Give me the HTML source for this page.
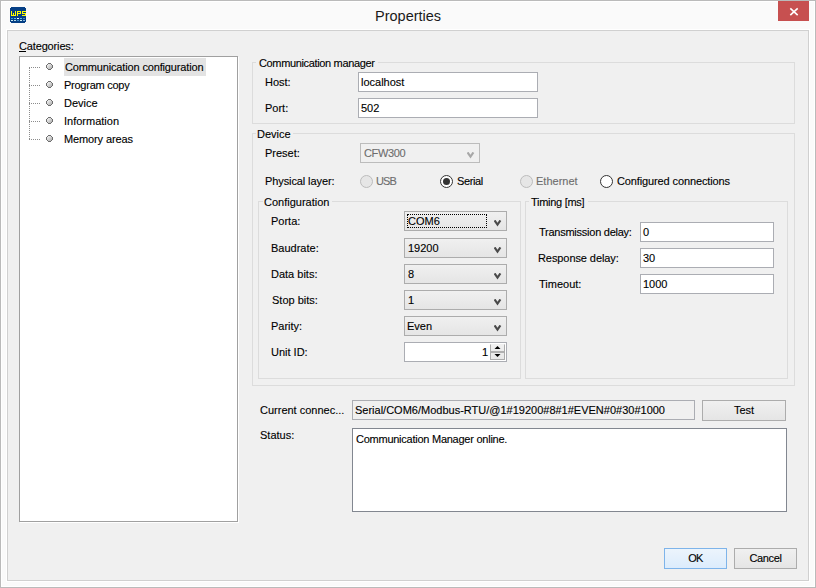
<!DOCTYPE html>
<html><head><meta charset="utf-8">
<style>
html,body{margin:0;padding:0;}
body{width:816px;height:588px;position:relative;overflow:hidden;background:#fafafa;font-family:"Liberation Sans",sans-serif;}
.a{position:absolute;box-sizing:border-box;}
.t{position:absolute;font-size:11px;line-height:13px;white-space:nowrap;color:#000;-webkit-text-stroke:0.12px #000;}
.gb{position:absolute;box-sizing:border-box;border:1px solid #dcdcdc;}
.lg{position:absolute;height:3px;background:#f0f0f0;}
.tb{position:absolute;box-sizing:border-box;border:1px solid #abadb3;background:#fff;}
.cb{position:absolute;box-sizing:border-box;border:1px solid #acacac;background:linear-gradient(#f0f0f0,#e5e5e5);}
.chev{position:absolute;width:8px;height:7px;}
.btn{position:absolute;box-sizing:border-box;border:1px solid #acacac;background:linear-gradient(#f0f0f0,#e5e5e5);}
.rd{position:absolute;box-sizing:border-box;width:13px;height:13px;border-radius:50%;border:1px solid #333;background:#fff;}
.rdd{border-color:#bcbcbc;background:#e6e6e6;}
.dis{color:#6d6d6d;-webkit-text-stroke-color:#6d6d6d;}
</style></head><body>
<!-- window frame -->
<div class="a" style="left:0;top:0;width:816px;height:588px;border:1px solid #bababa;"></div>
<div class="a" style="left:1px;top:1px;width:814px;height:586px;border:1px solid #ffffff;"></div>
<!-- icon -->
<svg class="a" style="left:10px;top:7px" width="16" height="16" viewBox="0 0 16 16" shape-rendering="crispEdges">
<rect x="0" y="1" width="16" height="14" fill="#053f85"/><rect x="1" y="0" width="14" height="16" fill="#053f85"/>
<g fill="#ffff00">
<rect x="1" y="4" width="1" height="5"/><rect x="3" y="6" width="1" height="3"/><rect x="5" y="4" width="1" height="5"/><rect x="1" y="8" width="5" height="1"/>
<rect x="7" y="4" width="1" height="5"/><rect x="7" y="4" width="4" height="1"/><rect x="10" y="4" width="1" height="3"/><rect x="7" y="6" width="4" height="1"/>
<rect x="12" y="4" width="4" height="1"/><rect x="12" y="4" width="1" height="3"/><rect x="12" y="6" width="4" height="1"/><rect x="15" y="6" width="1" height="3"/><rect x="12" y="8" width="4" height="1"/>
</g>
<rect x="1" y="11" width="2" height="1" fill="#2aa3d6"/><rect x="4" y="11" width="2" height="1" fill="#5cc0e6"/><rect x="7" y="11" width="2" height="1" fill="#ffffff"/><rect x="10" y="11" width="2" height="1" fill="#5cc0e6"/><rect x="13" y="11" width="2" height="1" fill="#4a86b8"/>
<rect x="1" y="13" width="2" height="1" fill="#c8e8f0"/><rect x="4" y="13" width="2" height="1" fill="#b8dcea"/><rect x="7" y="13" width="2" height="1" fill="#3f8fc8"/><rect x="10" y="13" width="2" height="1" fill="#d0ecf0"/><rect x="13" y="13" width="2" height="1" fill="#7fb4e0"/>
</svg>
<div class="t" style="left:375px;top:7px;font-size:14.5px;line-height:18px;-webkit-text-stroke:0;color:#1a1a1a;">Properties</div>
<!-- close -->
<div class="a" style="left:778px;top:1px;width:31px;height:20px;background:#c75050;"></div>
<svg class="a" style="left:789px;top:7px" width="10" height="10" viewBox="0 0 10 10"><path d="M1.3 1.3L8.7 8.2M8.7 1.3L1.3 8.2" stroke="#fff" stroke-width="1.6"/></svg>
<!-- client -->
<div class="a" style="left:7px;top:30px;width:802px;height:551px;border:1px solid #d0d0d0;background:#f0f0f0;box-shadow:0 0 0 1px #fff;"></div>

<div class="t" style="letter-spacing:-0.15px;left:19px;top:40px;">Categories:</div>
<div class="a" style="left:19px;top:51px;width:7px;height:1px;background:#000;"></div>
<!-- tree -->
<div class="a" style="left:19px;top:56px;width:219px;height:466px;border:1px solid #a0a0a0;background:#fff;box-shadow:1px 1px 0 #fff;"></div>
<div class="a" style="left:64px;top:58px;width:142px;height:18px;background:#e3e3e3;"></div>
<svg class="a" style="left:20px;top:57px" width="60" height="100">
<g fill="#8c8c8c" shape-rendering="crispEdges"><path d="M9 11h1v1h-1zM9 13h1v1h-1zM9 15h1v1h-1zM9 17h1v1h-1zM9 19h1v1h-1zM9 21h1v1h-1zM9 23h1v1h-1zM9 25h1v1h-1zM9 27h1v1h-1zM9 29h1v1h-1zM9 31h1v1h-1zM9 33h1v1h-1zM9 35h1v1h-1zM9 37h1v1h-1zM9 39h1v1h-1zM9 41h1v1h-1zM9 43h1v1h-1zM9 45h1v1h-1zM9 47h1v1h-1zM9 49h1v1h-1zM9 51h1v1h-1zM9 53h1v1h-1zM9 55h1v1h-1zM9 57h1v1h-1zM9 59h1v1h-1zM9 61h1v1h-1zM9 63h1v1h-1zM9 65h1v1h-1zM9 67h1v1h-1zM9 69h1v1h-1zM9 71h1v1h-1zM9 73h1v1h-1zM9 75h1v1h-1zM9 77h1v1h-1zM9 79h1v1h-1zM9 81h1v1h-1zM9 10h1v1h-1zM9 28h1v1h-1zM9 46h1v1h-1zM9 64h1v1h-1zM9 82h1v1h-1zM11 10h1v1h-1zM13 10h1v1h-1zM15 10h1v1h-1zM17 10h1v1h-1zM19 10h1v1h-1zM11 28h1v1h-1zM13 28h1v1h-1zM15 28h1v1h-1zM17 28h1v1h-1zM19 28h1v1h-1zM11 46h1v1h-1zM13 46h1v1h-1zM15 46h1v1h-1zM17 46h1v1h-1zM19 46h1v1h-1zM11 64h1v1h-1zM13 64h1v1h-1zM15 64h1v1h-1zM17 64h1v1h-1zM19 64h1v1h-1zM11 82h1v1h-1zM13 82h1v1h-1zM15 82h1v1h-1zM17 82h1v1h-1zM19 82h1v1h-1z"/></g>
<defs><linearGradient id="bg" x1="0" y1="0" x2="1" y2="1"><stop offset="0" stop-color="#fafafa"/><stop offset="1" stop-color="#aaaaaa"/></linearGradient>
</defs>
<g transform="translate(26 6)" shape-rendering="crispEdges"><path d="M1 2h5v3h-5zM2 1h3v5h-3z" fill="url(#bg)"/><path d="M2 0h3v1h-3zM2 6h3v1h-3zM0 2h1v3h-1zM6 2h1v3h-1zM1 1h1v1h-1zM5 1h1v1h-1zM1 5h1v1h-1zM5 5h1v1h-1z" fill="#6e6e6e"/></g><g transform="translate(26 24)" shape-rendering="crispEdges"><path d="M1 2h5v3h-5zM2 1h3v5h-3z" fill="url(#bg)"/><path d="M2 0h3v1h-3zM2 6h3v1h-3zM0 2h1v3h-1zM6 2h1v3h-1zM1 1h1v1h-1zM5 1h1v1h-1zM1 5h1v1h-1zM5 5h1v1h-1z" fill="#6e6e6e"/></g><g transform="translate(26 42)" shape-rendering="crispEdges"><path d="M1 2h5v3h-5zM2 1h3v5h-3z" fill="url(#bg)"/><path d="M2 0h3v1h-3zM2 6h3v1h-3zM0 2h1v3h-1zM6 2h1v3h-1zM1 1h1v1h-1zM5 1h1v1h-1zM1 5h1v1h-1zM5 5h1v1h-1z" fill="#6e6e6e"/></g><g transform="translate(26 60)" shape-rendering="crispEdges"><path d="M1 2h5v3h-5zM2 1h3v5h-3z" fill="url(#bg)"/><path d="M2 0h3v1h-3zM2 6h3v1h-3zM0 2h1v3h-1zM6 2h1v3h-1zM1 1h1v1h-1zM5 1h1v1h-1zM1 5h1v1h-1zM5 5h1v1h-1z" fill="#6e6e6e"/></g><g transform="translate(26 78)" shape-rendering="crispEdges"><path d="M1 2h5v3h-5zM2 1h3v5h-3z" fill="url(#bg)"/><path d="M2 0h3v1h-3zM2 6h3v1h-3zM0 2h1v3h-1zM6 2h1v3h-1zM1 1h1v1h-1zM5 1h1v1h-1zM1 5h1v1h-1zM5 5h1v1h-1z" fill="#6e6e6e"/></g>
</svg>
<div class="t" style="letter-spacing:-0.15px;left:65px;top:61px;">Communication configuration</div>
<div class="t" style="letter-spacing:-0.25px;left:64px;top:79px;">Program copy</div>
<div class="t" style="left:64px;top:97px;">Device</div>
<div class="t" style="left:64px;top:115px;">Information</div>
<div class="t" style="letter-spacing:-0.12px;left:64px;top:133px;">Memory areas</div>

<!-- Communication manager -->
<div class="gb" style="left:252px;top:62px;width:543px;height:62px;"></div>
<div class="lg" style="left:256px;top:61px;width:122px;"></div>
<div class="t" style="letter-spacing:-0.35px;left:259px;top:57px;">Communication manager</div>
<div class="t" style="left:265px;top:76px;">Host:</div>
<div class="tb" style="left:358px;top:72px;width:180px;height:20px;"></div>
<div class="t" style="left:361px;top:76px;">localhost</div>
<div class="t" style="left:265px;top:102px;">Port:</div>
<div class="tb" style="left:358px;top:98px;width:180px;height:20px;"></div>
<div class="t" style="left:361px;top:102px;">502</div>

<!-- Device -->
<div class="gb" style="left:252px;top:133px;width:543px;height:253px;"></div>
<div class="lg" style="left:256px;top:132px;width:37px;"></div>
<div class="t" style="left:257px;top:128px;">Device</div>
<div class="t" style="left:265px;top:147px;">Preset:</div>
<div class="a" style="left:360px;top:143px;width:120px;height:20px;border:1px solid #bcbcbc;background:#f0f0f0;"></div>
<div class="t dis" style="left:364px;top:147px;letter-spacing:-0.35px;">CFW300</div>
<svg class="chev" style="left:467px;top:152px"><path d="M0.6 0.4L3.5 4.7L6.4 0.4" fill="none" stroke="#a8a8a8" stroke-width="2.1"/></svg>

<div class="t" style="left:265px;top:175px;letter-spacing:-0.1px;">Physical layer:</div>
<div class="rd rdd" style="left:360px;top:175px;"></div>
<div class="t dis" style="left:376px;top:175px;letter-spacing:-0.9px;">USB</div>
<div class="rd" style="left:440px;top:175px;"></div>
<div class="a" style="left:443px;top:178px;width:7px;height:7px;border-radius:50%;background:#333;"></div>
<div class="t" style="left:457px;top:175px;letter-spacing:-0.4px;">Serial</div>
<div class="rd rdd" style="left:520px;top:175px;"></div>
<div class="t dis" style="left:536px;top:175px;">Ethernet</div>
<div class="rd" style="left:600px;top:175px;"></div>
<div class="t" style="letter-spacing:-0.12px;left:617px;top:175px;">Configured connections</div>

<!-- Configuration -->
<div class="gb" style="left:258px;top:201px;width:263px;height:178px;"></div>
<div class="lg" style="left:263px;top:200px;width:69px;"></div>
<div class="t" style="left:264px;top:196px;">Configuration</div>
<div class="t" style="left:271px;top:215px;">Porta:</div>
<div class="t" style="left:271px;top:242px;">Baudrate:</div>
<div class="t" style="left:271px;top:268px;">Data bits:</div>
<div class="t" style="left:272px;top:294px;">Stop bits:</div>
<div class="t" style="left:271px;top:320px;">Parity:</div>
<div class="t" style="left:271px;top:346px;">Unit ID:</div>

<div class="cb" style="left:404px;top:211px;width:103px;height:20px;"></div>
<div class="a" style="left:407px;top:214px;width:80px;height:14px;border:1px dotted #000;"></div>
<div class="t" style="left:408px;top:215px;">COM6</div>
<svg class="chev" style="left:494px;top:220px"><path d="M0.6 0.4L3.5 4.7L6.4 0.4" fill="none" stroke="#4a4a4a" stroke-width="2.1"/></svg>
<div class="cb" style="left:404px;top:238px;width:103px;height:20px;"></div>
<div class="t" style="left:408px;top:242px;">19200</div>
<svg class="chev" style="left:494px;top:247px"><path d="M0.6 0.4L3.5 4.7L6.4 0.4" fill="none" stroke="#4a4a4a" stroke-width="2.1"/></svg>
<div class="cb" style="left:404px;top:264px;width:103px;height:20px;"></div>
<div class="t" style="left:408px;top:268px;">8</div>
<svg class="chev" style="left:494px;top:273px"><path d="M0.6 0.4L3.5 4.7L6.4 0.4" fill="none" stroke="#4a4a4a" stroke-width="2.1"/></svg>
<div class="cb" style="left:404px;top:290px;width:103px;height:20px;"></div>
<div class="t" style="left:408px;top:294px;">1</div>
<svg class="chev" style="left:494px;top:299px"><path d="M0.6 0.4L3.5 4.7L6.4 0.4" fill="none" stroke="#4a4a4a" stroke-width="2.1"/></svg>
<div class="cb" style="left:404px;top:316px;width:103px;height:20px;"></div>
<div class="t" style="left:407px;top:320px;">Even</div>
<svg class="chev" style="left:494px;top:325px"><path d="M0.6 0.4L3.5 4.7L6.4 0.4" fill="none" stroke="#4a4a4a" stroke-width="2.1"/></svg>
<div class="tb" style="left:404px;top:342px;width:103px;height:20px;"></div>
<div class="t" style="left:482px;top:346px;">1</div>
<div class="a" style="left:490px;top:344px;width:15px;height:16px;border:1px solid #acacac;border-top-color:#f0f0f0;background:linear-gradient(#f0f0f0,#e8e8e8);"></div>
<div class="a" style="left:491px;top:351px;width:13px;height:2px;background:#b0b0b0;"></div>
<svg class="a" style="left:493px;top:345px" width="9" height="14"><path d="M1.5 4L4.5 1L7.5 4Z" fill="#000"/><path d="M1.5 9L4.5 12L7.5 9Z" fill="#000"/></svg>

<!-- Timing -->
<div class="gb" style="left:525px;top:201px;width:263px;height:178px;"></div>
<div class="lg" style="left:529px;top:200px;width:59px;"></div>
<div class="t" style="letter-spacing:-0.28px;left:531px;top:196px;">Timing [ms]</div>
<div class="t" style="letter-spacing:-0.25px;left:539px;top:226px;">Transmission delay:</div>
<div class="t" style="letter-spacing:-0.08px;left:538px;top:252px;">Response delay:</div>
<div class="t" style="left:539px;top:278px;">Timeout:</div>
<div class="tb" style="left:640px;top:222px;width:134px;height:20px;"></div>
<div class="t" style="left:643px;top:226px;">0</div>
<div class="tb" style="left:640px;top:248px;width:134px;height:20px;"></div>
<div class="t" style="left:643px;top:252px;">30</div>
<div class="tb" style="left:640px;top:274px;width:134px;height:20px;"></div>
<div class="t" style="left:643px;top:278px;">1000</div>

<!-- bottom -->
<div class="t" style="left:260px;top:404px;">Current connec...</div>
<div class="tb" style="left:352px;top:400px;width:343px;height:20px;background:#f0f0f0;"></div>
<div class="t" style="left:355px;top:404px;">Serial/COM6/Modbus-RTU/@1#19200#8#1#EVEN#0#30#1000</div>
<div class="btn" style="left:702px;top:400px;width:84px;height:21px;"></div>
<div class="t" style="left:702px;top:404px;width:84px;text-align:center;">Test</div>
<div class="t" style="left:260px;top:429px;">Status:</div>
<div class="a" style="left:352px;top:428px;width:435px;height:84px;border:1px solid #828790;background:#fff;"></div>
<div class="t" style="letter-spacing:-0.25px;left:356px;top:433px;">Communication Manager online.</div>

<div class="a" style="left:664px;top:548px;width:63px;height:21px;border:1px solid #7eb4ea;background:linear-gradient(#ecf4fc,#dcecfc);"></div>
<div class="t" style="left:664px;top:552px;width:63px;text-align:center;letter-spacing:-0.8px;">OK</div>
<div class="btn" style="left:734px;top:548px;width:63px;height:21px;"></div>
<div class="t" style="left:734px;top:552px;width:63px;text-align:center;letter-spacing:-0.4px;">Cancel</div>
</body></html>
